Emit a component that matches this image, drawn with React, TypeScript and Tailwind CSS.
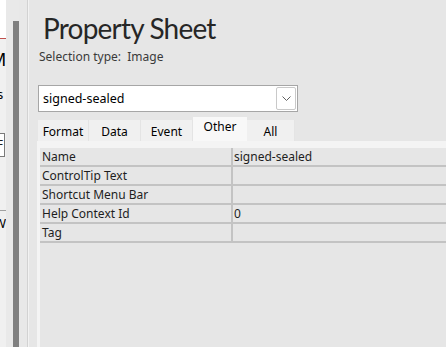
export default function App() {
  const rows: [string, string][] = [
    ["Name", "signed-sealed"],
    ["ControlTip Text", ""],
    ["Shortcut Menu Bar", ""],
    ["Help Context Id", "0"],
    ["Tag", ""],
  ];
  const tabs = [
    { t: "Format", w: "w-[51px]" },
    { t: "Data", w: "w-[52px]" },
    { t: "Event", w: "w-[52px]" },
    { t: "Other", w: "w-[54px]", sel: true },
    { t: "All", w: "w-[48px]" },
  ];
  return (
    <div className="flex w-[446px] h-[347px] overflow-hidden bg-[#e6e6e6] text-[#1e1e1e] font-['Noto_Sans',sans-serif]">
      {/* left window fragment */}
      <div className="w-[6px] h-full flex flex-col overflow-hidden bg-[#f0f0f0]">
        <div className="h-[38px] bg-white shrink-0" />
        <div className="h-[1px] bg-[#c0504d] shrink-0" />
        <div className="h-[12px] shrink-0" />
        <div className="h-[16px] shrink-0 ml-[-10px] text-[18px] leading-[16px] text-black">M</div>
        <div className="h-[20px] shrink-0" />
        <div className="h-[14px] shrink-0 ml-[-3px] text-[13px] leading-[14px] text-black">s</div>
        <div className="h-[32px] shrink-0" />
        <div className="h-[24px] shrink-0 ml-[-20px] w-[25px] border border-[#7a7a7a] bg-white text-[12px] leading-[22px] text-right pr-[1px]">F</div>
        <div className="h-[53px] shrink-0" />
        <div className="h-[1px] shrink-0 bg-[#a0a0a0]" />
        <div className="h-[5px] shrink-0" />
        <div className="h-[14px] shrink-0 ml-[-6px] text-[13px] leading-[14px] text-black">W</div>
      </div>
      {/* splitter */}
      <div className="w-[7px] h-full bg-[#e9e9e9]" />
      <div className="w-[6px] h-full flex flex-col bg-[#e9e9e9]">
        <div className="h-[21px]" />
        <div className="flex-1 bg-[#808080]" />
      </div>
      <div className="w-[8px] h-full bg-[#e8e8e8]" />
      <div className="w-[1px] h-full bg-[#d2d2d2]" />
      <div className="w-[1px] h-full bg-[#f2f2f2]" />
      {/* main */}
      <div className="flex-1 flex flex-col min-w-0">
        <div className="pl-[14px] pt-[10px] h-[38px] text-[28px] leading-[36px] tracking-[-0.8px] font-['Lato',sans-serif] text-[#262626] whitespace-nowrap">
          Property Sheet
        </div>
        <div className="pl-[10px] mt-[11px] text-[12px] leading-[16px] text-[#3a3a3a] whitespace-nowrap">
          Selection type:&nbsp; Image
        </div>
        <div className="ml-[9px] mt-[20px] w-[260px] h-[27px] border border-[#a6a6a6] bg-white flex items-center">
          <div className="flex-1 pl-[4px] text-[12.5px] leading-[16px] text-black">signed-sealed</div>
          <div className="w-[20px] h-[23px] mr-[1px] border border-[#c9c9c9] rounded-[2px] flex items-center justify-center">
            <svg width="9" height="5" viewBox="0 0 9 5">
              <path d="M0.5 0.5 L4.5 4.5 L8.5 0.5" fill="none" stroke="#606060" strokeWidth="1" />
            </svg>
          </div>
        </div>
        <div className="ml-[9px] mt-[5px] flex items-end h-[24px]">
          {tabs.map((tb) => (
            <div
              key={tb.t}
              className={
                tb.sel
                  ? `${tb.w} h-[24px] bg-[#f8f8f8] text-[12px] leading-[20px] text-center text-black`
                  : `${tb.w} h-[21px] bg-[#f0f0f0] border-r border-[#e4e4e4] text-[12px] leading-[23px] text-center text-black`
              }
            >
              {tb.t}
            </div>
          ))}
        </div>
        <div className="ml-[8px] flex-1 bg-[#f4f4f4] pl-[3px] pt-[7px] flex flex-col">
          <div className="flex-1 bg-[#e6e6e6] flex flex-col">
            {rows.map(([k, v]) => (
              <div key={k} className="flex h-[19px] border-b-2 border-[#c3c3c3]">
                <div className="w-[191px] pl-[2px] text-[12px] leading-[17px] text-[#1e1e1e] whitespace-nowrap">{k}</div>
                <div className="w-[2px] bg-[#c3c3c3]" />
                <div className="flex-1 pl-[1px] text-[12px] leading-[17px] text-[#1e1e1e] whitespace-nowrap">{v}</div>
              </div>
            ))}
          </div>
        </div>
      </div>
    </div>
  );
}
